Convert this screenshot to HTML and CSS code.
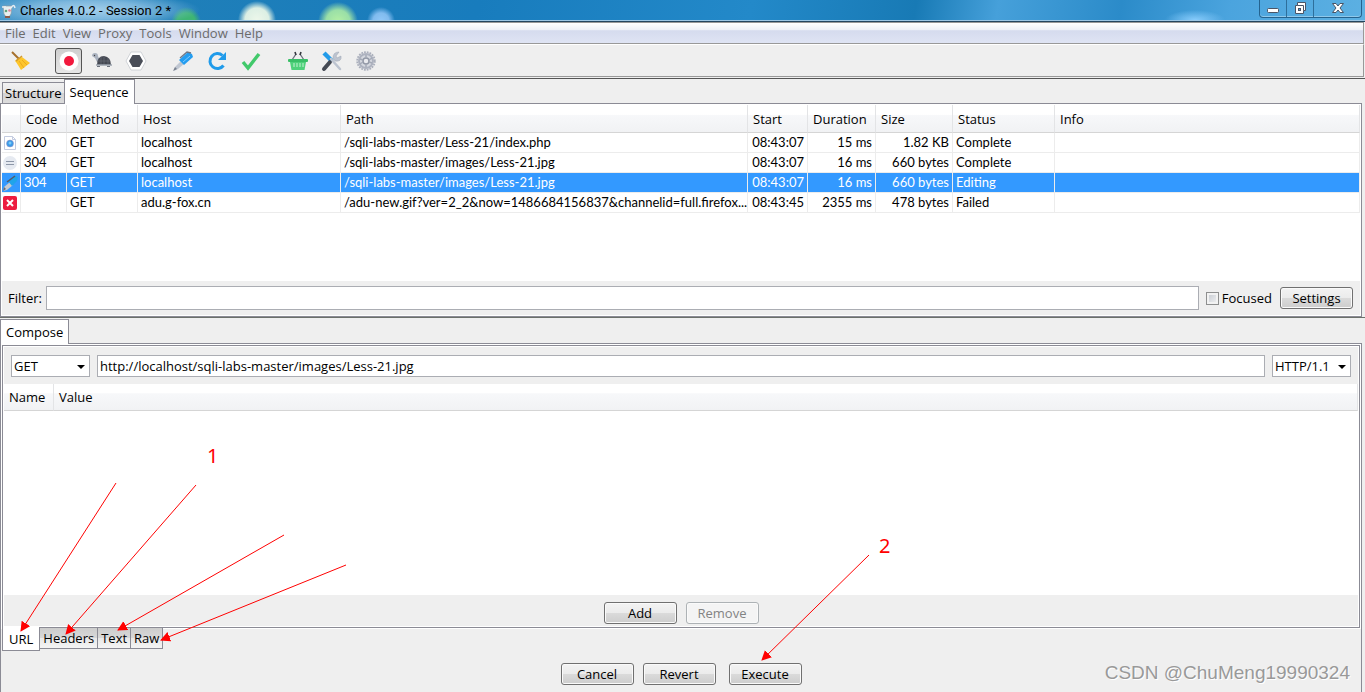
FILE: index.html
```html
<!DOCTYPE html>
<html lang="en">
<head>
<meta charset="utf-8">
<title>Charles 4.0.2 - Session 2 *</title>
<link rel="stylesheet" href="styles.css">
</head>
<body>
<div class="app">
  <header class="titlebar">
    <svg class="app-icon" width="15" height="18" viewBox="0 0 15 18"><path d="M2 4h9l-1 8-2 3H5l-2-3z" fill="#e8efef" stroke="#8a9aa0" stroke-width=".7"/><path d="M1 5h4M10 6q3-5 4 0" fill="none" stroke="#e8eef2" stroke-width="1.5"/><circle cx="5" cy="9" r="1.3" fill="#62a37c"/><circle cx="8.500" cy="8.500" r="1.300" fill="#e17f9a"/><path d="M4 14h5v2H4z" fill="#8b5a4a"/></svg>
    <h1 class="title">Charles 4.0.2 - Session 2 *</h1>
    <div class="window-buttons">
      <button class="wbtn" aria-label="Minimize"><svg width="14" height="14" viewBox="0 0 14 14"><rect x="1.500" y="7.500" width="11" height="4" rx="1" fill="#fff" stroke="#4a5566"/></svg></button>
      <button class="wbtn" aria-label="Restore"><svg width="14" height="14" viewBox="0 0 14 14"><path d="M4.500 1.500h8v8h-2v3h-8v-8h2z" fill="#fff" stroke="#4a5566"/><path d="M4.500 4.500h6v5" fill="none" stroke="#4a5566"/><rect x="5.500" y="7.500" width="2" height="2" fill="#54a4d8" stroke="#4a5566"/></svg></button>
      <button class="wbtn wbtn-close" aria-label="Close"><svg width="14" height="14" viewBox="0 0 14 14"><path d="M1.500 2.500h3.500l2 2.500 2-2.500h3.500L9 7l3.500 4.500H9L7 9l-2 2.500H1.500L5 7z" fill="#fff" stroke="#4a5566"/></svg></button>
    </div>
  </header>
  <nav class="menubar">
    <button>File</button><button>Edit</button><button>View</button><button>Proxy</button><button>Tools</button><button>Window</button><button>Help</button>
  </nav>
  <div class="toolbar">
    <button class="tool" aria-label="Clear"><svg width="22" height="22" viewBox="0 0 22 22"><path d="M3 2l7 7" stroke="#a5702c" stroke-width="2"/><path d="M8 9l5-2 8 6-9 7c-3-5-4-7-6-9z" fill="#fdc62b"/><path d="M10 11l5 7M13 10l5 5" stroke="#eea91d"/><path d="M7 11l6-5" stroke="#d29a2e" stroke-width="1.500"/></svg></button>
    <button class="tool tool-on" aria-label="Record"><svg width="22" height="22" viewBox="0 0 22 22"><circle cx="11" cy="11" r="9.500" fill="#fff"/><circle cx="11" cy="11" r="5" fill="#f2193d"/></svg></button>
    <button class="tool" aria-label="Throttle"><svg width="22" height="22" viewBox="0 0 22 22"><path d="M1 6q0-3 3-3 3 0 3 3l2 5-3 1-2-4z" fill="#aab2bf"/><circle cx="3.500" cy="5.500" r=".7" fill="#444"/><path d="M6 15q0-9 7-9 7 1 7 9z" fill="#454953"/><path d="M10 7v8M13 6v9M17 8v7M7 11h12" stroke="#717682" stroke-width=".5"/><path d="M5 15h16" stroke="#9da4af" stroke-width="1.500"/><path d="M6 16h3v1H6zM16 16h3v1h-3z" fill="#6c727d"/></svg></button>
    <button class="tool" aria-label="Breakpoints"><svg width="22" height="22" viewBox="0 0 22 22"><path d="M6 2h10l5 9-5 9H6l-5-9z" fill="#fff" stroke="#c7cacf" stroke-width=".8"/><path d="M7.500 5h7l3.500 6-3.500 6h-7L4 11z" fill="#4a4e58"/></svg></button>
    <button class="tool gap-before" aria-label="Compose"><svg width="22" height="22" viewBox="0 0 22 22"><path d="M10 10l3 3-7 6-4 2 1-4z" fill="#bfc6d1"/><path d="M1 21l2-4 2 2z" fill="#777f8d"/><path d="M7 10l9-8 4 2 1 3-9 8z" fill="#249df0"/><path d="M8 8l7-6 4 1" fill="none" stroke="#6c7686" stroke-width="1.300"/><path d="M11 12l7-6" stroke="#7fcbff"/></svg></button>
    <button class="tool" aria-label="Repeat"><svg width="22" height="22" viewBox="0 0 22 22"><path d="M17.500 15.500A7.500 7.500 0 1 1 16.500 5.500" fill="none" stroke="#209bea" stroke-width="3"/><path d="M20 2v8h-8z" fill="#209bea"/></svg></button>
    <button class="tool" aria-label="Validate"><svg width="22" height="22" viewBox="0 0 22 22"><path d="M3 12l5 6L19 4" fill="none" stroke="#42c96b" stroke-width="3.400"/></svg></button>
    <button class="tool gap-before" aria-label="Shop"><svg width="22" height="22" viewBox="0 0 22 22"><path d="M5 10l4-6M17 10l-4-6" stroke="#69707c" stroke-width="1.300"/><path d="M8 2l1 3M14 2l-1 3" stroke="#33363e" stroke-width="1.600"/><rect x="1" y="9" width="20" height="3" rx="1" fill="#39bf67"/><path d="M3 12h16l-1.500 8h-13z" fill="#4fd17b"/><path d="M7 13v4M10 13v4M13 13v4M16 13v4" stroke="#c5f2d3"/></svg></button>
    <button class="tool" aria-label="Tools"><svg width="22" height="22" viewBox="0 0 22 22"><path d="M3 3l8 8" stroke="#229be9" stroke-width="4.500"/><path d="M9 12l-6 7" stroke="#444953" stroke-width="4" stroke-linecap="round"/><path d="M10 9l9 10" stroke="#bdc4d0" stroke-width="2.500" stroke-linecap="round"/><path d="M18 2l-3 4 1 2 4-2q1 6-6 5l-2-3q0-6 6-6" fill="#bdc4d0" stroke="#9ba3b1" stroke-width=".5"/></svg></button>
    <button class="tool" aria-label="Settings"><svg width="22" height="22" viewBox="0 0 22 22"><circle cx="11" cy="11" r="8.800" fill="none" stroke="#a9aebb" stroke-width="1.800" stroke-dasharray="1.800 1"/><circle cx="11" cy="11" r="7" fill="#d5d8df" stroke="#adb2bf" stroke-width="2"/><circle cx="11" cy="11" r="3" fill="#e9eaee" stroke="#9298a6" stroke-width="1.500"/><path d="M11 5v3M11 14v3M5 9l3 1M14 12l3 1M5 14l3-2M14 10l3-2" stroke="#a4a9b6" stroke-width="1.500"/></svg></button>
  </div>

  <main class="workspace">
    <div class="tabs tabs-top">
      <button class="tab">Structure</button><button class="tab tab-active">Sequence</button>
    </div>
    <section class="sequence">
      <div class="table-area">
        <table class="grid">
          <colgroup><col class="c-icon"><col class="c-code"><col class="c-method"><col class="c-host"><col class="c-path"><col class="c-start"><col class="c-duration"><col class="c-size"><col class="c-status"><col></colgroup>
          <thead><tr><th></th><th>Code</th><th>Method</th><th>Host</th><th>Path</th><th>Start</th><th>Duration</th><th>Size</th><th>Status</th><th>Info</th></tr></thead>
          <tbody>
            <tr><td class="icon"><svg width="16" height="16" viewBox="0 0 16 16"><path d="M2.500 1.500h8l3 3v10h-11z" fill="#fff" stroke="#c3cbe0"/><path d="M10.500 1.500v3h3" fill="none" stroke="#c3cbe0"/><circle cx="8" cy="8.500" r="3.500" fill="#3a9be8" stroke="#9a8fc0" stroke-width=".5"/><circle cx="8" cy="8" r="1.500" fill="#7cc8f8"/></svg></td><td>200</td><td>GET</td><td>localhost</td><td>/sqli-labs-master/Less-21/index.php</td><td class="num">08:43:07</td><td class="num">15 ms</td><td class="num">1.82 KB</td><td>Complete</td><td></td></tr>
            <tr><td class="icon"><svg width="16" height="16" viewBox="0 0 16 16"><circle cx="8" cy="8" r="7" fill="#e6eaf1"/><path d="M4 6.500h8M4 9.500h8" stroke="#8d97a8"/></svg></td><td>304</td><td>GET</td><td>localhost</td><td>/sqli-labs-master/images/Less-21.jpg</td><td class="num">08:43:07</td><td class="num">16 ms</td><td class="num">660 bytes</td><td>Complete</td><td></td></tr>
            <tr class="selected"><td class="icon"><svg width="16" height="16" viewBox="0 0 16 16"><path d="M8 7l3 3-6 5-4 1 1-4z" fill="#c5cad2"/><path d="M1 16l1-4 2 2z" fill="#5f6878"/><path d="M6 6l7-5 3 1-1 4-5 5z" fill="#1fa4ea"/><path d="M5 7l8-6" stroke="#535a68" stroke-width="1.500"/></svg></td><td>304</td><td>GET</td><td>localhost</td><td>/sqli-labs-master/images/Less-21.jpg</td><td class="num">08:43:07</td><td class="num">16 ms</td><td class="num">660 bytes</td><td>Editing</td><td></td></tr>
            <tr><td class="icon"><svg width="16" height="16" viewBox="0 0 16 16"><rect x="1" y="1" width="14" height="14" rx="2" fill="#ed1c40"/><path d="M5 5l6 6M11 5l-6 6" stroke="#fff" stroke-width="2"/></svg></td><td></td><td>GET</td><td>adu.g-fox.cn</td><td>/adu-new.gif?ver=2_2&amp;now=1486684156837&amp;channelid=full.firefox...</td><td class="num">08:43:45</td><td class="num">2355 ms</td><td class="num">478 bytes</td><td>Failed</td><td></td></tr>
          </tbody>
        </table>
      </div>
      <div class="filter">
        <label for="filter">Filter:</label>
        <input class="field" id="filter" type="text">
        <input class="check" id="focused" type="checkbox"><label class="focused-label" for="focused">Focused</label>
        <button class="btn">Settings</button>
      </div>
    </section>
    <div class="tabs tabs-compose">
      <button class="tab tab-active">Compose</button>
    </div>
    <section class="compose">
      <div class="editor">
        <div class="request">
          <div class="dropdown"><select aria-label="Method"><option>GET</option></select></div>
          <input class="field" type="text" aria-label="URL" value="http://localhost/sqli-labs-master/images/Less-21.jpg">
          <div class="dropdown"><select aria-label="Protocol"><option>HTTP/1.1</option></select></div>
        </div>
        <div class="params">
          <table class="grid">
            <colgroup><col class="c-name"><col></colgroup>
            <thead><tr><th>Name</th><th>Value</th></tr></thead>
          </table>
        </div>
        <div class="actions">
          <button class="btn">Add</button><button class="btn" disabled>Remove</button>
        </div>
      </div>
      <div class="tabs-bottom">
        <button class="btab btab-active">URL</button><button class="btab">Headers</button><button class="btab">Text</button><button class="btab">Raw</button>
      </div>
      <div class="commands">
        <button class="btn">Cancel</button><button class="btn">Revert</button><button class="btn btn-execute">Execute</button>
      </div>
    </section>
  </main>

  <svg class="notes" width="1365" height="692" viewBox="0 0 1365 692">
    <defs><marker id="head" markerUnits="userSpaceOnUse" markerWidth="12" markerHeight="12" refX="9" refY="5" orient="auto"><path d="M0 0l10 5-10 5z" fill="#f00"/></marker></defs>
    <g stroke="#f00">
      <path d="M116 483L21 631" marker-end="url(#head)"/>
      <path d="M196 485L66 634" marker-end="url(#head)"/>
      <path d="M284 535L118 630" marker-end="url(#head)"/>
      <path d="M346 565L161 640" marker-end="url(#head)"/>
      <path d="M869 555L762 660" marker-end="url(#head)"/>
    </g>
    <text x="207" y="463">1</text>
    <text x="879" y="553">2</text>
  </svg>
  <div class="watermark">CSDN @ChuMeng19990324</div>
</div>
</body>
</html>
```
FILE: styles.css
```css
* { box-sizing: border-box; }
body {
  margin: 0;
  background: #efefef;
  color: #000;
  font: 13px/20px "Open Sans", "Noto Sans", sans-serif;
}
button, input, select { font: inherit; color: inherit; margin: 0; }
button { padding: 0; }
svg { display: block; }

.app {
  position: relative;
  display: flex;
  flex-direction: column;
  min-height: 100vh;
  overflow: hidden;
}

/* Title bar */
.titlebar {
  display: flex;
  height: 22px;
  padding: 0 3px 0 1px;
  border-bottom: 1px solid #24465f;
  box-shadow: inset 0 -1px #9cc6e4;
  background:
    radial-gradient(ellipse 110px 18px at 90px 10px, #a3cfeb 0, #8fc2e4cc 50%, transparent 100%),
    radial-gradient(circle at 186px 22px, #3eb573 0, #3eb573 9px, transparent 15px),
    radial-gradient(circle at 257px 20px, #edf7ea 0, #dcefe4 12px, transparent 19px),
    radial-gradient(circle at 338px 22px, #b5f0a4 0, #9adfa7 12px, transparent 20px),
    radial-gradient(circle at 381px 21px, #91c8f8 0, #80bbee 8px, transparent 14px),
    radial-gradient(ellipse 30px 10px at 1195px 20px, #88ccfc, transparent),
    linear-gradient(100deg, #3f94c8 0, #1f7fb9 13%, #187cbd 35%, #2389c9 55%, #187ab5 67%, #46a0da 73%, #2b8bc9 82%, #4ba4de 90%, #5cb0e2 100%);
}
.app-icon { margin-top: 2px; }
.title { flex: 1; margin: 0 0 0 4px; font: 13px/21px Roboto, "Open Sans", sans-serif; }
.window-buttons {
  display: flex;
  height: 18px;
  border: 1px solid #24638f;
  border-top: 0;
  border-radius: 0 0 4px 4px;
  box-shadow: inset 0 -1px #8fc8ea;
}
.wbtn {
  display: flex;
  justify-content: center;
  width: 27px;
  padding-top: 1px;
  border: 0;
  border-right: 1px solid #2e6f9b;
  background: none;
}
.wbtn-close { width: 47px; border-right: 0; }

/* Menu and toolbar */
.menubar {
  display: flex;
  gap: 7px;
  height: 22px;
  margin-right: 1px;
  padding: 0 5px;
  border: 1px solid #999;
  border-width: 1px 1px 1px 0;
  background: linear-gradient(#fff 0, #edf0f7 36%, #d5dbee 38%, #dfe4f4 100%);
}
.menubar button { border: 0; background: none; color: #6b6b6b; line-height: 20px; }
.toolbar {
  display: flex;
  align-items: center;
  gap: 8px;
  height: 33px;
  margin-right: 1px;
  padding-left: 7px;
  border: 1px solid #999;
  border-top-color: #fff;
  border-left: 0;
}
.tool {
  display: flex;
  align-items: center;
  justify-content: center;
  width: 26px;
  height: 26px;
  border: 0;
  background: none;
}
.tool-on {
  width: 27px;
  margin: 0 -1px 0 14px;
  border: 1px solid #555;
  border-radius: 3px;
  background: linear-gradient(#cfcfcf, #e6e6e6);
}
.gap-before { margin-left: 13px; }

/* Tabs */
.workspace { flex: 1; display: flex; flex-direction: column; margin-top: 1px; border-top: 1px solid #555; }
.tabs { display: flex; align-items: flex-end; }
.tabs-top { height: 24px; padding-left: 2px; }
.tab {
  height: 21px;
  padding: 0 2px;
  border: 1px solid #8b8b95;
  border-bottom: 0;
  background: linear-gradient(#f1f1f1 0, #e7e7e7 50%, #d3d3d3 52%, #dcdcdc 100%);
}
.tab-active { z-index: 1; height: 25px; margin-bottom: -1px; padding: 0 5px 1px; background: #fff; }
.tabs-top .tab { border-right: 0; }
.tabs-top .tab-active { border-right: 1px solid #8b8b95; }
.tabs-compose { height: 26px; border-top: 1px solid #6b706b; }

/* Data grids */
.sequence {
  margin-right: 3px;
  padding: 1px;
  border: 1px solid #8b8b95;
  background: #fff;
}
.table-area { height: 176px; }
.grid { width: 100%; table-layout: fixed; border-collapse: separate; border-spacing: 0; }
.grid th {
  height: 28px;
  padding: 0 5px;
  border-right: 1px solid #e3e4e6;
  border-bottom: 1px solid #d5d5d5;
  background: linear-gradient(#fff 0, #fff 35%, #f7f8fa 37%, #f1f2f4 100%);
  font-weight: 400;
  text-align: left;
}
.grid td {
  height: 20px;
  padding: 0 3px;
  border-right: 1px solid #ececec;
  border-bottom: 1px solid #ececec;
  font-family: Lato, "Open Sans", sans-serif;
  line-height: 19px;
  white-space: nowrap;
  overflow: hidden;
}
.grid .icon { padding: 0; }
.grid .num { text-align: right; }
.selected td { background: #3399ff; color: #fff; }
.c-icon { width: 19px; }
.c-code { width: 46px; }
.c-method { width: 71px; }
.c-host { width: 203px; }
.c-path { width: 407px; }
.c-start { width: 60px; }
.c-duration { width: 68px; }
.c-size { width: 77px; }
.c-status { width: 102px; }
.c-name { width: 50px; }

/* Controls */
.filter {
  display: flex;
  align-items: center;
  height: 34px;
  padding: 0 7px 0 6px;
  background: #efefef;
}
.field {
  flex: 1;
  min-width: 0;
  height: 24px;
  padding: 0 2px;
  border: 1px solid #abadb3;
  background: #fff;
}
.filter .field { margin: 0 7px 0 4px; }
.check {
  appearance: none;
  width: 13px;
  height: 13px;
  border: 1px solid #8e8f8f;
  background: linear-gradient(135deg, #c3c8d0, #f4f4f4);
  box-shadow: inset 0 0 0 2px #f2f2f2;
}
.focused-label { margin: 0 8px 0 3px; }
.btn {
  width: 73px;
  height: 22px;
  border: 1px solid #707070;
  border-radius: 3px;
  background: linear-gradient(#f3f3f3 0, #ebebeb 50%, #dadada 52%, #cdcdcd 100%);
  box-shadow: inset 0 0 0 1px #fafafa;
  line-height: 20px;
}
.btn:disabled { border-color: #adb2b5; background: #f4f4f4; color: #838383; }

/* Compose */
.compose {
  flex: 1;
  margin-right: 3px;
  border: 1px solid #8b8b95;
  border-bottom: 0;
  display: flex;
  flex-direction: column;
}
.editor {
  flex: 1;
  display: flex;
  flex-direction: column;
  margin: 1px 1px 0;
  padding: 1px;
  border: 1px solid #8b8b95;
  background: #fff;
  outline: 1px solid #fff;
}
.request {
  display: flex;
  align-items: center;
  gap: 7px;
  height: 37px;
  padding: 0 7px;
  background: #efefef;
}
.request .field { height: 22px; }
.dropdown { position: relative; width: 79px; }
.dropdown select {
  appearance: none;
  display: block;
  width: 100%;
  height: 22px;
  padding: 0 2px;
  border: 1px solid #abadb3;
  border-radius: 0;
  background: #fff;
}
.dropdown::after {
  content: "";
  position: absolute;
  right: 5px;
  top: 10px;
  border: 4px solid transparent;
  border-top-color: #000;
  border-bottom: 0;
}
.params { flex: 1; }
.params th { height: 27px; }
.actions { display: flex; justify-content: center; align-items: center; gap: 9px; height: 31px; padding-top: 5px; background: #efefef; }
.tabs-bottom { display: flex; align-items: flex-start; height: 23px; padding-left: 1px; }
.btab {
  height: 21px;
  padding: 0 3px;
  border: 1px solid #8b8b95;
  border-top: 0;
  border-left: 0;
  background: linear-gradient(#cdcdcd 0, #d8d8d8 50%, #e8e8e8 52%, #f4f4f4 100%);
}
.btab-active { z-index: 1; height: 24px; margin-top: -1px; padding: 1px 6px 0; border-left: 1px solid #8b8b95; background: #fff; }
.commands { display: flex; justify-content: center; gap: 9px; padding: 12px 0 7px; }
.btn-execute { margin-left: 4px; }

/* Overlays */
.notes { position: absolute; z-index: 2; left: 0; top: 0; pointer-events: none; }
.notes text { fill: #f00; font: 20px "Noto Sans", sans-serif; }
.watermark {
  position: absolute;
  right: 15px;
  bottom: 5px;
  color: #999;
  font: 19px/28px "Liberation Sans", Arial, sans-serif;
  text-shadow: 1px 1px #fff;
  pointer-events: none;
}
```
